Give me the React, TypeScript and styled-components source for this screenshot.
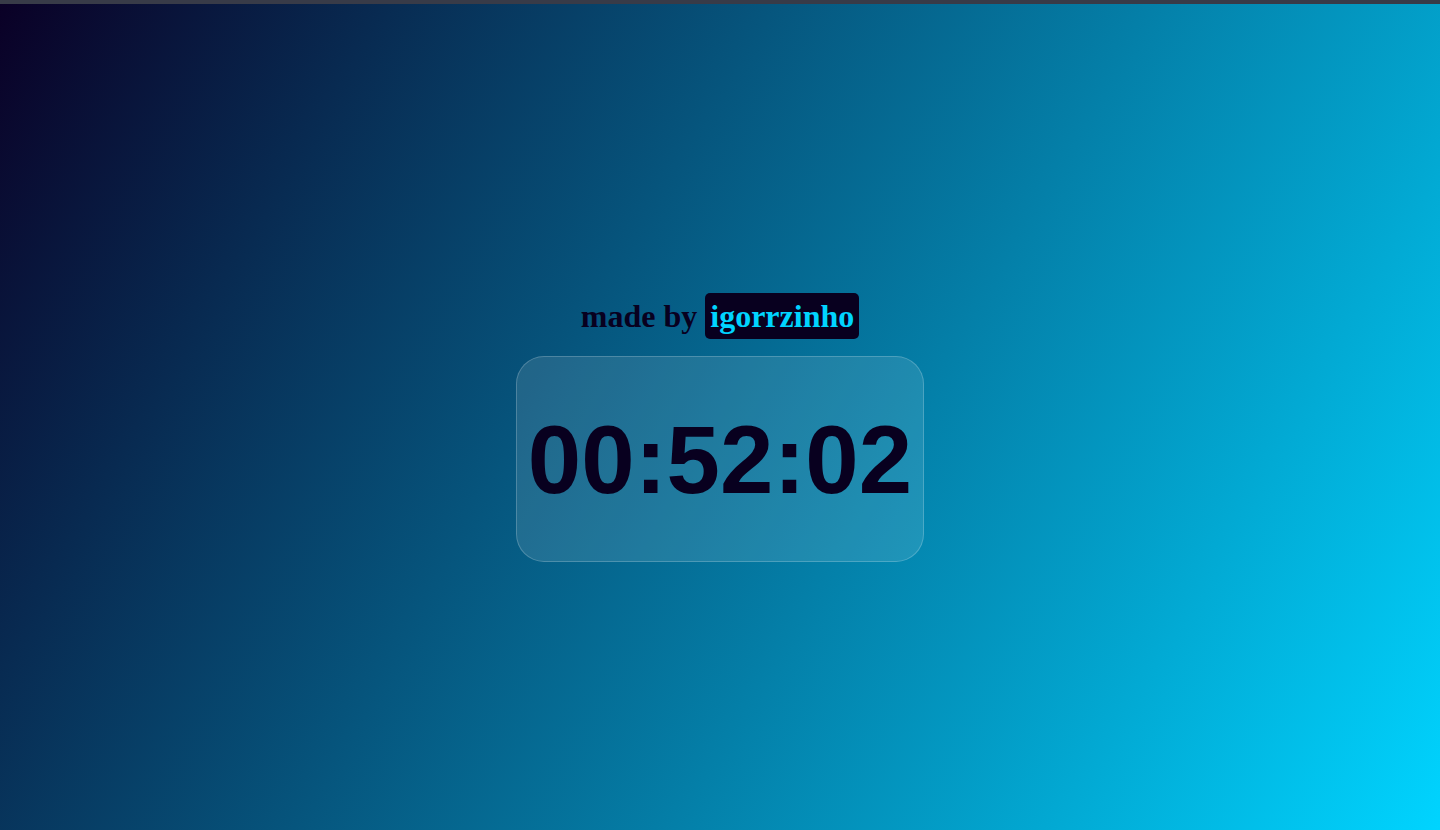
import React from "react";
import styled, { createGlobalStyle } from "styled-components";

const GlobalStyle = createGlobalStyle`
  html, body {
    margin: 0;
    padding: 0;
    height: 100%;
  }
  body {
    background: #383b48;
    font-family: "Liberation Serif", "Times New Roman", serif;
  }
`;

const Page = styled.div`
  display: flex;
  flex-direction: column;
  min-height: 100vh;
`;

const TopBar = styled.div`
  height: 4px;
  background: #383b48;
  flex-shrink: 0;
`;

const Main = styled.main`
  flex: 1;
  display: flex;
  flex-direction: column;
  align-items: center;
  justify-content: center;
  padding-top: 4px;
  background: linear-gradient(120deg, #0a0026 0%, #00d4ff 100%);
`;

const Credit = styled.h1`
  margin: 0.67em 0;
  font-family: "Liberation Serif", "Times New Roman", serif;
  font-size: 32px;
  font-weight: 700;
  color: #08001f;
`;

const Handle = styled.span`
  background: #08001f;
  color: #00d4ff;
  padding: 5px;
  border-radius: 5px;
`;

const Card = styled.div`
  box-sizing: border-box;
  width: 408px;
  height: 206px;
  display: flex;
  align-items: center;
  justify-content: center;
  background: rgba(255, 255, 255, 0.11);
  border: 1.5px solid rgba(255, 255, 255, 0.2);
  border-radius: 28px;
`;

const Time = styled.span`
  font-family: "Liberation Sans", Arial, sans-serif;
  font-size: 96px;
  font-weight: 700;
  color: #08001f;
  line-height: normal;
  transform: translateY(1px);
`;

export default function App() {
  return (
    <>
      <GlobalStyle />
      <Page>
        <TopBar />
        <Main>
          <Credit>
            made by <Handle>igorrzinho</Handle>
          </Credit>
          <Card>
            <Time>00:52:02</Time>
          </Card>
        </Main>
      </Page>
    </>
  );
}
